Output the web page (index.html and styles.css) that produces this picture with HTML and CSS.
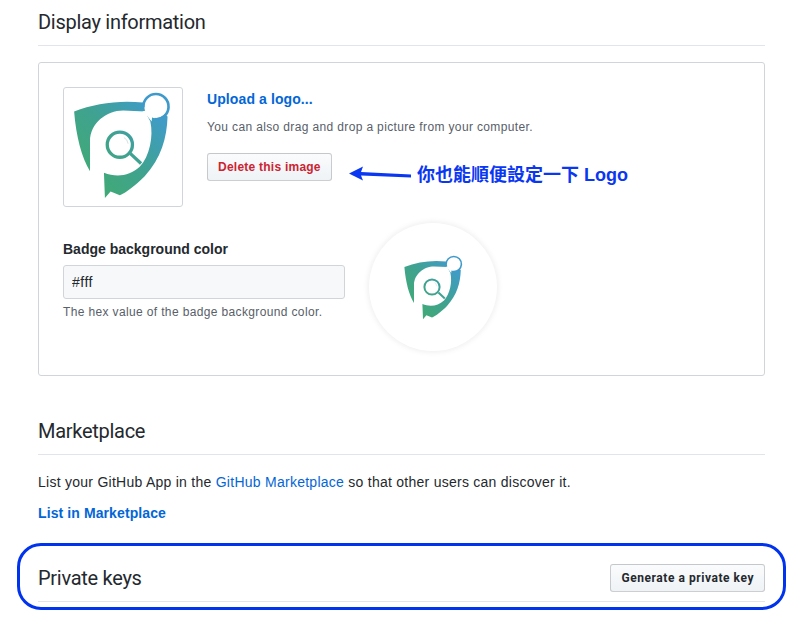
FILE: index.html
```html
<!DOCTYPE html>
<html lang="en">
<head>
<meta charset="utf-8">
<title>Display information</title>
<link rel="stylesheet" href="styles.css">
</head>
<body>
<svg class="defs" width="0" height="0" aria-hidden="true">
  <defs>
    <linearGradient id="lg" gradientUnits="userSpaceOnUse" x1="160" y1="330" x2="360" y2="150">
      <stop offset="0" stop-color="#40a977"/>
      <stop offset="0.5" stop-color="#3fa291"/>
      <stop offset="1" stop-color="#409cc4"/>
    </linearGradient>
    <symbol id="logo" viewBox="90 60 310 335">
      <path fill="url(#lg)" d="M102 125C165 100 240 90 310 98L349 110L384 140C382 205 365 265 315 320C285 350 260 368 240 378L212 366L195 386L192 310C230 325 270 320 300 292C330 260 342 200 332 155L316 125L250 122C200 122 150 160 150 215L150 305C125 265 108 200 102 125Z"/>
      <circle cx="349" cy="110" r="35" fill="#fff"/>
      <path fill="#fff" d="M308 125L340 115L336 155L322 138Z"/>
      <path fill="none" stroke="#3f9acb" stroke-width="8" d="M311 112A38 38 0 1 1 345 148"/>
      <circle cx="240" cy="225" r="38" fill="#fff" stroke="url(#lg)" stroke-width="10"/>
      <path fill="none" stroke="#d5dfe0" stroke-width="3" d="M252 203A26 26 0 0 1 265 222"/>
      <path fill="none" stroke="url(#lg)" stroke-width="10" d="M272 252L304 282"/>
    </symbol>
  </defs>
</svg>

<main class="page">
  <h2 class="heading">Display information</h2>

  <section class="panel">
    <div class="logo-row">
      <div class="logo-box"><svg class="logo-large"><use href="#logo"/></svg></div>
      <div class="logo-info">
        <a class="strong-link upload" href="#">Upload a logo...</a>
        <p class="hint">You can also drag and drop a picture from your computer.</p>
        <button class="btn btn-danger" type="button">Delete this image</button>
      </div>
    </div>
    <div class="badge-row">
      <div class="badge-form">
        <label class="label" for="badge-color">Badge background color</label>
        <input class="input" id="badge-color" type="text" value="#fff">
        <p class="note">The hex value of the badge background color.</p>
      </div>
      <div class="badge"><svg class="logo-small"><use href="#logo"/></svg></div>
    </div>
  </section>

  <h2 class="heading heading-market">Marketplace</h2>
  <p class="copy">List your GitHub App in the <a class="link" href="#">GitHub Marketplace</a> so that other users can discover it.</p>
  <a class="strong-link" href="#">List in Marketplace</a>

  <div class="heading heading-keys">
    <h2 class="heading-text">Private keys</h2>
    <button class="btn btn-wide" type="button">Generate a private key</button>
  </div>
</main>

<div class="frame"></div>
<svg class="arrow" width="70" height="20" viewBox="0 0 70 20" aria-hidden="true">
  <path d="M0 8.500L14 1.500L12 7L62 9.500L62 12.500L12 10.500L14 15.500Z" fill="#0a37f2"/>
</svg>
<div class="note-callout">你也能順便設定一下 Logo</div>
</body>
</html>
```
FILE: styles.css
```css
* { box-sizing: border-box; }
html, body { margin: 0; padding: 0; }
body {
  width: 795px;
  height: 617px;
  overflow: hidden;
  position: relative;
  background: #fff;
  color: #24292e;
  font-family: "Liberation Sans", Arial, sans-serif;
  font-size: 14px;
}
.defs { position: absolute; }
.page { padding: 0 30px 0 38px; }
.heading {
  margin: 0;
  height: 46px;
  padding-top: 10px;
  border-bottom: 1px solid #e1e4e8;
  font-family: Roboto, sans-serif;
  font-size: 20px;
  line-height: 25px;
  letter-spacing: -.28px;
  font-weight: 400;
}
.panel {
  margin-top: 16px;
  height: 314px;
  padding: 24px;
  border: 1px solid #d1d5da;
  border-radius: 3px;
}
.logo-row { display: flex; gap: 24px; }
.logo-box {
  width: 120px;
  height: 120px;
  border: 1px solid #d1d5da;
  border-radius: 3px;
  display: flex;
  align-items: center;
  justify-content: center;
}
.logo-large { width: 103px; height: 111px; margin-left: -3px; margin-top: -3px; }
.logo-info { display: flex; flex-direction: column; align-items: flex-start; }
.strong-link {
  color: #0366d6;
  font-weight: 700;
  font-size: 14px;
  line-height: 20px;
  letter-spacing: .1px;
  text-decoration: none;
  display: block;
}
.upload { margin-top: 2px; }
.hint {
  margin: 10px 0 0;
  font-size: 12px;
  line-height: 16px;
  letter-spacing: .36px;
  color: #586069;
}
.btn {
  height: 28px;
  padding: 0 10px;
  border: 1px solid rgba(27, 31, 35, .2);
  border-radius: 3px;
  background: linear-gradient(#fafbfc, #eff3f6);
  color: #24292e;
  font-family: inherit;
  font-size: 12px;
  font-weight: 700;
  letter-spacing: .24px;
}
.btn-danger { margin-top: 18px; color: #cb2431; }
.btn-wide { letter-spacing: .55px; }
.badge-row {
  display: flex;
  align-items: flex-start;
  gap: 24px;
  margin-top: 16px;
}
.badge-form { width: 282px; padding-top: 16px; }
.label { display: block; font-weight: 700; line-height: 20px; }
.input {
  display: block;
  width: 100%;
  height: 34px;
  margin-top: 6px;
  padding: 0 8px;
  border: 1px solid #d1d5da;
  border-radius: 3px;
  background: #f6f8fa;
  color: #24292e;
  font-family: inherit;
  font-size: 14px;
  letter-spacing: .5px;
}
.note {
  margin: 5px 0 0;
  font-size: 12px;
  line-height: 16px;
  letter-spacing: .36px;
  color: #586069;
}
.badge {
  width: 128px;
  height: 128px;
  border-radius: 50%;
  background: #fff;
  box-shadow: 0 0 6px rgba(27, 31, 35, .1);
  display: flex;
  align-items: center;
  justify-content: center;
}
.logo-small { width: 62px; height: 67px; }
.heading-market { margin-top: 33px; }
.copy { margin: 17px 0 0; line-height: 20px; letter-spacing: .26px; }
.link { color: #0366d6; text-decoration: none; }
.copy + .strong-link { margin-top: 11px; }
.heading-keys {
  margin-top: 32px;
  height: 47px;
  padding: 0;
  display: flex;
  align-items: center;
  justify-content: space-between;
}
.heading-text { margin: 0; font-size: 20px; line-height: 25px; font-weight: 400; }
.frame {
  position: absolute;
  left: 17px;
  top: 543px;
  width: 769px;
  height: 67px;
  border: 3px solid #0033ee;
  border-radius: 24px;
}
.arrow { position: absolute; left: 349px; top: 165px; }
.note-callout {
  position: absolute;
  left: 417px;
  top: 163px;
  font-family: "Liberation Sans", "Noto Sans CJK TC", sans-serif;
  font-size: 18px;
  line-height: 24px;
  font-weight: 700;
  color: #0a37f2;
  white-space: nowrap;
}
```
